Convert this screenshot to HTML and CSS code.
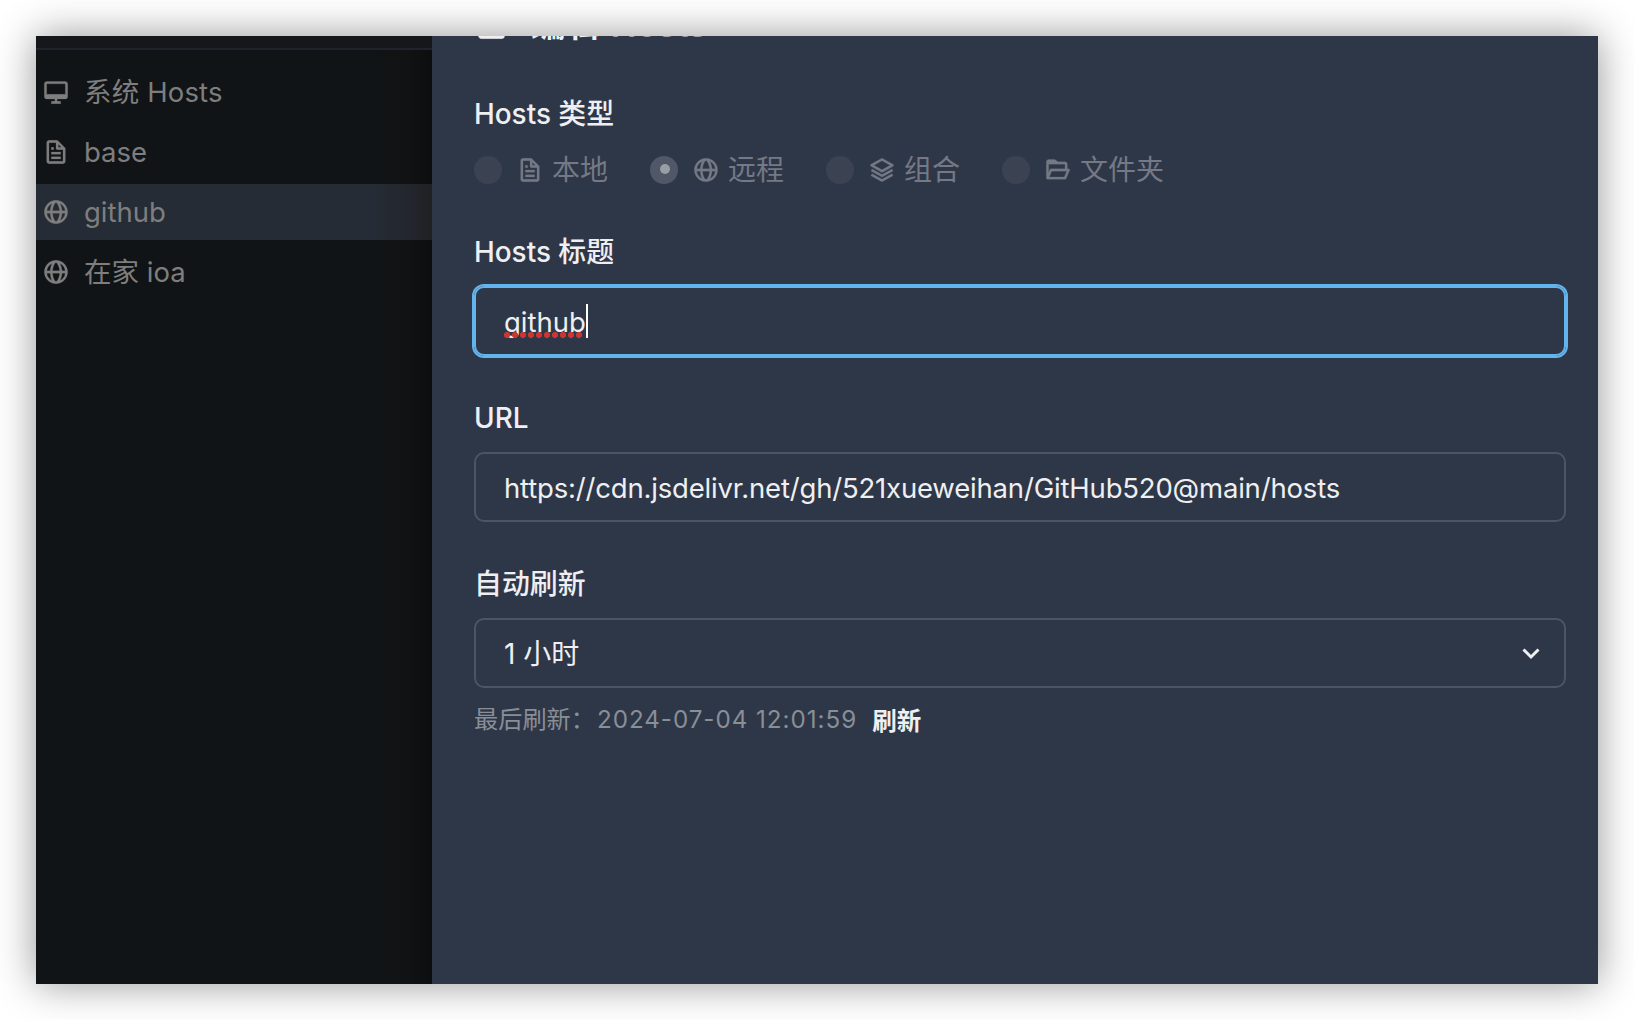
FILE: index.html
```html
<!DOCTYPE html>
<html lang="zh-CN">
<head>
<meta charset="utf-8">
<title>SwitchHosts</title>
<link rel="stylesheet" href="styles.css">
</head>
<body>
<svg class="defs" width="0" height="0" aria-hidden="true">
  <symbol id="i-desktop" viewBox="0 0 24 24"><path d="M20 3H4c-1.103 0-2 .897-2 2v11c0 1.103.897 2 2 2h7v2H8v2h8v-2h-3v-2h7c1.103 0 2-.897 2-2V5c0-1.103-.897-2-2-2zM4 14V5h16l.002 9H4z"/></symbol>
  <symbol id="i-file" viewBox="0 0 24 24"><path d="M19.903 8.586a.997.997 0 0 0-.196-.293l-6-6a.997.997 0 0 0-.293-.196c-.03-.014-.062-.022-.094-.033a.991.991 0 0 0-.259-.051C13.04 2.011 13.021 2 13 2H6c-1.103 0-2 .897-2 2v16c0 1.103.897 2 2 2h12c1.103 0 2-.897 2-2V9c0-.021-.011-.04-.013-.062a.952.952 0 0 0-.051-.259c-.01-.032-.019-.063-.033-.093zM16.586 8H14V5.414L16.586 8zM6 20V4h6v5a1 1 0 0 0 1 1h5l.002 10H6z"/><path d="M8 12h8v2H8zm0 4h8v2H8zm0-8h2v2H8z"/></symbol>
  <symbol id="i-globe" viewBox="0 0 24 24"><path d="M12 2C6.486 2 2 6.486 2 12s4.486 10 10 10 10-4.486 10-10S17.514 2 12 2zm7.931 9h-2.764a14.67 14.67 0 0 0-1.792-6.243A8.013 8.013 0 0 1 19.931 11zM12.53 4.027c1.035 1.364 2.427 3.78 2.627 6.973H9.03c.139-2.596.994-5.028 2.451-6.974.172-.01.344-.026.519-.026.179 0 .354.016.53.027zm-3.842.7C7.704 6.618 7.136 8.762 7.03 11H4.069a8.013 8.013 0 0 1 4.619-6.273zM4.069 13h2.974c.136 2.379.665 4.478 1.556 6.23A8.01 8.01 0 0 1 4.069 13zm7.381 6.973C10.049 18.275 9.222 15.896 9.041 13h6.113c-.208 2.773-1.117 5.196-2.603 6.972-.182.012-.364.028-.551.028-.186 0-.367-.016-.55-.027zm4.011-.772c.955-1.794 1.538-3.901 1.691-6.201h2.778a8.005 8.005 0 0 1-4.469 6.201z"/></symbol>
  <symbol id="i-layer" viewBox="0 0 24 24"><path d="m21.484 7.125-9.022-5a1.003 1.003 0 0 0-.968-.001l-8.978 4.96a1 1 0 0 0-.002 1.749l9.022 5.04a.995.995 0 0 0 .973.001l8.978-5a1 1 0 0 0-.003-1.749zm-9.461 4.73-6.964-3.89 6.917-3.822 6.964 3.859-6.917 3.853z"/><path d="m12 15.856-8.515-4.73-.971 1.748 9 5a1 1 0 0 0 .971 0l9-5-.971-1.748L12 15.856z"/><path d="m12 19.856-8.515-4.73-.971 1.748 9 5a1 1 0 0 0 .971 0l9-5-.971-1.748L12 19.856z"/></symbol>
  <symbol id="i-folder" viewBox="0 0 24 24"><path d="M2.165 19.551c.186.28.499.449.835.449h15c.4 0 .762-.238.919-.606l3-7A.998.998 0 0 0 21 11h-1V7c0-1.103-.897-2-2-2h-6.1L9.616 3.213A.997.997 0 0 0 9 3H4c-1.103 0-2 .897-2 2v14h.007a1 1 0 0 0 .158.551zM17.341 18H4.517l2.143-5h12.824l-2.143 5zM18 7v4H6c-.4 0-.762.238-.919.606L4 14.129V7h14z"/></symbol>
  <symbol id="i-edit" viewBox="0 0 24 24"><path d="m18.988 2.012 3 3L19.701 7.3l-3-3zM8 16h3l7.287-7.287-3-3L8 13z"/><path d="M19 19H8.158c-.026 0-.053.01-.079.01-.033 0-.066-.009-.1-.01H5V5h6.847l2-2H5c-1.103 0-2 .896-2 2v14c0 1.104.897 2 2 2h14a2 2 0 0 0 2-2v-8.668l-2 2V19z"/></symbol>
</svg>
<div class="window">
  <aside class="sidebar">
    <div class="topbar"></div>
    <nav class="list">
      <div class="item"><svg class="icon"><use href="#i-desktop"/></svg><span class="wide">系统 Hosts</span></div>
      <div class="item"><svg class="icon"><use href="#i-file"/></svg><span>base</span></div>
      <div class="item selected"><svg class="icon"><use href="#i-globe"/></svg><span>github</span></div>
      <div class="item"><svg class="icon"><use href="#i-globe"/></svg><span>在家 ioa</span></div>
    </nav>
  </aside>
  <main class="drawer">
    <header class="title"><svg class="icon title-icon"><use href="#i-edit"/></svg><span>编辑 <span class="latin">Hosts</span></span></header>
    <section class="group">
      <div class="label">Hosts 类型</div>
      <div class="radios">
        <div class="radio"><i class="dot"></i><svg class="icon"><use href="#i-file"/></svg><span>本地</span></div>
        <div class="radio"><i class="dot on"></i><svg class="icon"><use href="#i-globe"/></svg><span>远程</span></div>
        <div class="radio"><i class="dot"></i><svg class="icon"><use href="#i-layer"/></svg><span>组合</span></div>
        <div class="radio"><i class="dot"></i><svg class="icon"><use href="#i-folder"/></svg><span>文件夹</span></div>
      </div>
    </section>
    <section class="group">
      <div class="label">Hosts 标题</div>
      <div class="field focused"><span class="misspelled">github</span><i class="caret"></i></div>
    </section>
    <section class="group">
      <div class="label">URL</div>
      <div class="field"><span class="url">https://cdn.jsdelivr.net/gh/521xueweihan/GitHub520@main/hosts</span></div>
    </section>
    <section class="group">
      <div class="label">自动刷新</div>
      <div class="field select"><span>1 小时</span><svg class="chevron" viewBox="0 0 18 12"><path d="M1.5 1.5l7.5 7.5 7.5-7.5"/></svg></div>
      <div class="helper"><span>最后刷新：</span><span class="time">2024-07-04 12:01:59</span><b class="refresh">刷新</b></div>
    </section>
  </main>
</div>
</body>
</html>
```
FILE: styles.css
```css
* { box-sizing: border-box; }

body {
  margin: 0;
  padding: 36px;
  height: 1020px;
  overflow: hidden;
  background: #fff;
  font-family: Inter, "Noto Sans CJK SC", sans-serif;
  font-size: 27.5px;
  line-height: 42px;
  white-space: nowrap;
}

.defs { position: absolute; }

.window {
  display: flex;
  width: 1562px;
  height: 948px;
  box-shadow: 0 0 38px rgba(0, 0, 0, .42);
}

.icon {
  flex: none;
  width: 28px;
  height: 28px;
  fill: currentColor;
  stroke: currentColor;
  stroke-width: .2;
}

.sidebar {
  width: 396px;
  color: #7f7e7e;
  background: linear-gradient(90deg, #101416 330px, #111213 370px, #0b0e0f 396px);
}

.topbar {
  height: 14px;
  background: #16171b;
  border-bottom: 2px solid #20232b;
}

.list {
  display: flex;
  flex-direction: column;
  gap: 4px;
  padding-top: 14px;
}

.item {
  display: flex;
  align-items: center;
  gap: 14px;
  height: 56px;
  padding-left: 6px;
}

.wide { letter-spacing: .15px; }

.selected { background: linear-gradient(90deg, #262c36 330px, #23272e 370px, #1f2023 396px); }

.drawer {
  flex: 1;
  padding: 0 32px 0 42px;
  overflow: hidden;
  color: #efeff1;
  background: #2e3748;
}

.title {
  display: flex;
  align-items: center;
  gap: 22px;
  height: 42px;
  margin-top: -32px;
  margin-bottom: 46px;
  font-size: 34.5px;
  font-weight: 600;
}

.title-icon { width: 35px; height: 35px; }

.latin {
  margin-left: 2px;
  line-height: 1;
  color: #9da2ab;
}

.group { margin-bottom: 40px; }

.label {
  height: 42px;
  margin-bottom: 14px;
  padding-top: 1px;
  font-size: 27.9px;
  font-weight: 500;
}

.radios {
  display: flex;
  gap: 42px;
  height: 42px;
  padding-top: 2px;
  color: #747985;
}

.radio {
  display: flex;
  align-items: center;
  height: 40px;
}

.radio span { margin-left: 8px; font-size: 28px; }

.dot {
  display: flex;
  align-items: center;
  justify-content: center;
  width: 28px;
  height: 28px;
  margin-right: 14px;
  border-radius: 50%;
  background: #3b4353;
}

.on {
  padding: 0 0 2px 2px;
  background: #505867;
}

.on::before {
  content: "";
  width: 10px;
  height: 10px;
  border-radius: 50%;
  background: #999da4;
}

.field {
  display: flex;
  align-items: center;
  height: 70px;
  padding: 2px 24px 0 28px;
  border: 2px solid #4c5566;
  border-radius: 10px;
}

.url { letter-spacing: -.18px; }

.focused {
  border-color: #63b3ed;
  box-shadow: 0 0 0 2px #63b3ed;
}

.misspelled { position: relative; }

.misspelled::after {
  content: "";
  position: absolute;
  left: -1px;
  top: 31px;
  width: 80px;
  height: 6px;
  background: radial-gradient(circle, #d0342f 2.8px, transparent 3.2px) 0 0 / 8px 6px;
}

.caret {
  width: 2px;
  height: 34px;
  margin-bottom: 2px;
  background: #fff;
}

.select {
  justify-content: space-between;
  font-size: 28px;
}

.chevron {
  width: 18px;
  height: 12px;
  fill: none;
  stroke: #efeff1;
  stroke-width: 3;
}

.helper {
  display: flex;
  margin-top: 11px;
  font-size: 24.2px;
  color: #898e97;
}

.time {
  margin-left: 2px;
  letter-spacing: .97px;
}

.refresh {
  margin-left: 15px;
  padding-top: 1px;
  font-size: 24.5px;
  font-weight: 600;
  color: #efeff1;
}
```
